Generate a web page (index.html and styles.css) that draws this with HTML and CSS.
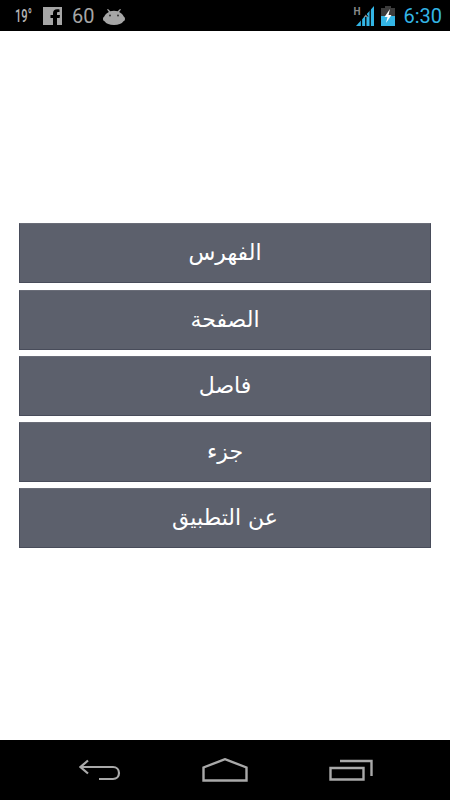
FILE: index.html
```html
<!DOCTYPE html>
<html lang="ar">
<head>
<meta charset="utf-8">
<title>القائمة</title>
<link rel="stylesheet" href="styles.css">
</head>
<body>
<div class="screen">
  <header class="status" dir="ltr">
    <div class="status-left">
      <span class="temp">19°</span>
      <svg class="ic-fb" viewBox="0 0 19 18"><path fill="#a6a6a6" d="M0 0h19v18h-5v-7h2.600l.4-3h-3V6.500c0-.9.3-1.400 1.400-1.400H16.500V2.400c-.4 0-1.200-.1-2.400-.1-2.500 0-4.100 1.400-4.100 4V8H7.500v3H10v7H0z"/></svg>
      <span class="sixty">60</span>
      <svg class="ic-bot" viewBox="0 0 22 17"><path fill="#a6a6a6" d="M5 1l2.300 2.300C8.300 3 9.600 2.800 11 2.800s2.700.2 3.700.5L17 1l1 .6-1.900 2.400C18.500 5 20 6.800 20.700 8.600 21.600 9.100 22 9.900 22 11c0 1.100-.6 1.900-1.600 2.300C18.900 15.800 15.400 17 11 17S3.100 15.800 1.600 13.300C.6 12.900 0 12.100 0 11c0-1.100.4-1.900 1.300-2.400C2 6.800 3.500 5 5.900 4L4 1.600z"/><circle cx="7" cy="7.500" r="1" fill="#333"/><circle cx="15" cy="7.500" r="1" fill="#333"/></svg>
    </div>
    <div class="status-right">
      <span class="h-mark">H</span>
      <svg class="ic-signal" viewBox="0 0 18 20">
        <path fill="#33b5e5" d="M0 20L18 0v20z"/>
        <path stroke="#000" stroke-width="1.300" d="M5.500 20V12M9.800 20V8M14.200 20V3"/>
        <path fill="#000" d="M9.800 7l2.800 3.500H7z"/>
        <path fill="#8a8a8a" d="M9.800 8.500l2 2.500H7.800z"/>
      </svg>
      <svg class="ic-batt" viewBox="0 0 14 20">
        <path fill="#3c3c3c" d="M4 0h6v2h4v8H0V2h4z"/>
        <path fill="#33b5e5" d="M0 10h14v10H0z"/>
        <path fill="#fff" d="M9 3L3.500 11h3L5 17l5.500-8h-3z"/>
      </svg>
      <span class="clock">6:30</span>
    </div>
  </header>

  <main class="menu">
    <a class="btn">الفهرس</a>
    <a class="btn">الصفحة</a>
    <a class="btn">فاصل</a>
    <a class="btn">جزء</a>
    <a class="btn">عن التطبيق</a>
  </main>

  <nav class="navbar" dir="ltr">
    <svg class="ic-back" viewBox="0 0 42 22"><path fill="none" stroke="#a9a9a9" stroke-width="2.200" d="M9 1.500L1.500 8 9 14.500M2 8h32c3.500 0 6 2.500 6 6s-2.500 6-6 6H20"/></svg>
    <svg class="ic-home" viewBox="0 0 46 24"><path fill="none" stroke="#a9a9a9" stroke-width="2.400" d="M1.500 22.500V9.500L23 1.200l21.500 8.300v13z"/></svg>
    <svg class="ic-recent" viewBox="0 0 44 22"><path fill="none" stroke="#a9a9a9" stroke-width="2.400" d="M11 2h31.500v15M1.500 9h33v11.500h-33z"/></svg>
  </nav>
</div>
</body>
</html>
```
FILE: styles.css
```css
* { box-sizing: border-box; }
html, body { margin: 0; padding: 0; }
body { background: #fff; font-family: "DejaVu Sans", sans-serif; }
.screen { width: 450px; height: 800px; display: flex; flex-direction: column; overflow: hidden; }

.status { height: 31px; background: #000; display: flex; justify-content: space-between; align-items: center; flex: none; padding: 0 8px 0 15px; }
.status-left, .status-right { display: flex; align-items: center; }
.temp { font: 500 18px/1 "Roboto", sans-serif; color: #b4b4b4; width: 28px; display: inline-block; white-space: nowrap; transform: scaleX(0.62); transform-origin: left center; }
.ic-fb { width: 19px; height: 18px; margin-top: 1px; }
.sixty { font: 400 20px/1 "Roboto", sans-serif; color: #a6a6a6; margin-left: 10px; }
.ic-bot { width: 22px; height: 17px; margin-left: 9px; margin-top: 1px; }
.status-right { position: relative; }
.h-mark { position: absolute; left: -3px; top: 1px; font: 700 10px/1 "Roboto", sans-serif; color: #8a8a8a; }
.ic-signal { width: 18px; height: 20px; }
.ic-batt { width: 14px; height: 20px; margin-left: 7px; }
.clock { font: 400 20px/1 "Roboto", sans-serif; color: #33b5e5; margin-left: 8px; }

.menu { flex: 1; display: flex; flex-direction: column; justify-content: center; gap: 6.25px; padding: 0.5px 19px 0; background: #fff; }
.btn { height: 60px; flex: none; display: flex; align-items: center; justify-content: center; background: #5c606c; border: 1px solid #484c5a; border-top-color: #6a6d78; color: #fff; font-size: 22px; line-height: 1; }

.navbar { height: 60px; flex: none; background: #000; display: flex; align-items: center; justify-content: space-between; padding: 0 77px 0 79px; }
.ic-back { width: 42px; height: 22px; }
.ic-home { width: 46px; height: 24px; }
.ic-recent { width: 44px; height: 22px; }
```
